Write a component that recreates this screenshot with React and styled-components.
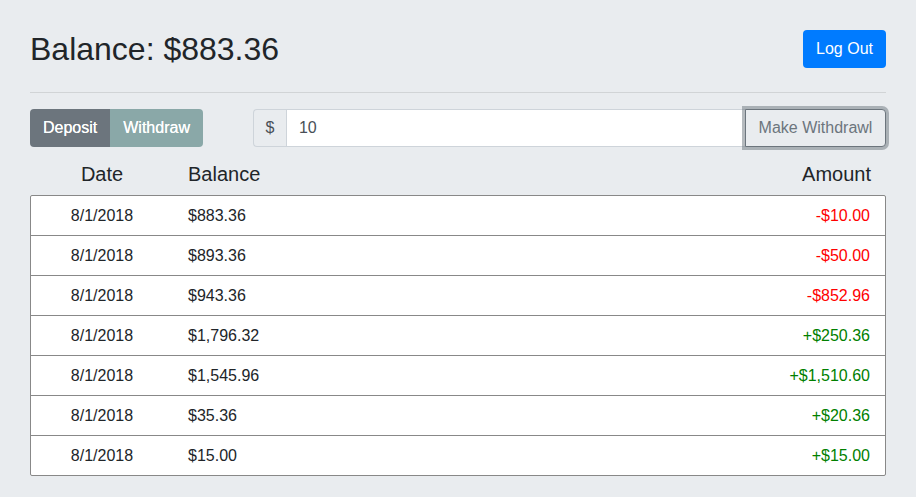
import React from 'react';
import styled, { createGlobalStyle } from 'styled-components';

const GlobalStyle = createGlobalStyle`
	body {
		margin:0;
		background:#e9ecef;
		font-family:"Liberation Sans", Arial, sans-serif;
		color:#212529;
	}
`;

const Page = styled.div`
	padding:30px 30px 20px 30px;
`;

const Header = styled.div`
	display:flex;
	justify-content:space-between;
	align-items:center;
`;

const Title = styled.h2`
	margin:0;
	font-size:32px;
	font-weight:normal;
	line-height:38px;
`;

const Button = styled.button`
	font-family:inherit;
	font-size:16px;
	line-height:24px;
	height:38px;
	padding:6px 12px;
	border-radius:4px;
	border:1px solid transparent;
	color:#fff;
	background:${({ bg }) => bg || '#007bff'};
	cursor:pointer;
`;

const Rule = styled.hr`
	border:0;
	border-top:1px solid rgba(0,0,0,0.1);
	margin:24px 0 16px 0;
`;

const Controls = styled.div`
	display:flex;
	align-items:center;
	gap:50px;
`;

const ButtonGroup = styled.div`
	display:flex;
	border-radius:4px;
	overflow:hidden;
`;

const GroupButton = styled(Button)`
	border-radius:0;
	padding:6px 12px;
	text-shadow:0 0 0.4px #fff;
	background:${({ active }) => active ? '#6c757d' : '#8aa8a8'};
`;

const InputGroup = styled.div`
	flex:1;
	display:flex;
	height:38px;
`;

const Prepend = styled.div`
	display:flex;
	align-items:center;
	justify-content:center;
	width:32px;
	border:1px solid #ced4da;
	border-right:none;
	border-radius:4px 0 0 4px;
	background:#e9ecef;
	color:#495057;
	font-size:16px;
`;

const Input = styled.input`
	flex:1;
	min-width:0;
	font-family:inherit;
	font-size:16px;
	color:#495057;
	padding:6px 12px;
	border:1px solid #ced4da;
	border-right:none;
	background:#fff;
	outline:none;
`;

const OutlineButton = styled(Button)`
	color:#6c757d;
	background:#e9ecef;
	border:1px solid #6c757d;
	border-radius:0 4px 4px 0;
	box-shadow:0 0 0 3px rgba(108,117,125,0.5);
	width:141px;
	padding:6px 0;
`;

const HeadRow = styled.div`
	display:grid;
	grid-template-columns:142px 1fr auto;
	padding:12px 15px 6px 1px;
	font-size:20px;
	line-height:30px;
`;

const Cell = styled.div`
	text-align:${({ align }) => align || 'left'};
	padding-left:${({ indent }) => indent ? '15px' : '0'};
	color:${({ tone }) => tone || 'inherit'};
`;

const Table = styled.div`
	background:#fff;
	border:1px solid #888;
	border-radius:2px;
`;

const Row = styled.div`
	display:grid;
	grid-template-columns:142px 1fr auto;
	align-items:center;
	height:39px;
	padding-right:15px;
	font-size:16px;
	& + & {
		border-top:1px solid #888;
	}
`;

const rows = [
	['8/1/2018', '$883.36', '-$10.00'],
	['8/1/2018', '$893.36', '-$50.00'],
	['8/1/2018', '$943.36', '-$852.96'],
	['8/1/2018', '$1,796.32', '+$250.36'],
	['8/1/2018', '$1,545.96', '+$1,510.60'],
	['8/1/2018', '$35.36', '+$20.36'],
	['8/1/2018', '$15.00', '+$15.00'],
];

export default function App() {
	return (
		<Page>
			<GlobalStyle />
			<Header>
				<Title>Balance: $883.36</Title>
				<Button>Log Out</Button>
			</Header>
			<Rule />
			<Controls>
				<ButtonGroup>
					<GroupButton active>Deposit</GroupButton>
					<GroupButton>Withdraw</GroupButton>
				</ButtonGroup>
				<InputGroup>
					<Prepend>$</Prepend>
					<Input defaultValue="10" />
					<OutlineButton>Make Withdrawl</OutlineButton>
				</InputGroup>
			</Controls>
			<HeadRow>
				<Cell align="center">Date</Cell>
				<Cell indent>Balance</Cell>
				<Cell align="right">Amount</Cell>
			</HeadRow>
			<Table>
				{rows.map(([date, balance, amount], i) => (
					<Row key={i}>
						<Cell align="center">{date}</Cell>
						<Cell indent>{balance}</Cell>
						<Cell align="right" tone={amount[0] === '-' ? '#ff0000' : '#008000'}>{amount}</Cell>
					</Row>
				))}
			</Table>
		</Page>
	);
}
